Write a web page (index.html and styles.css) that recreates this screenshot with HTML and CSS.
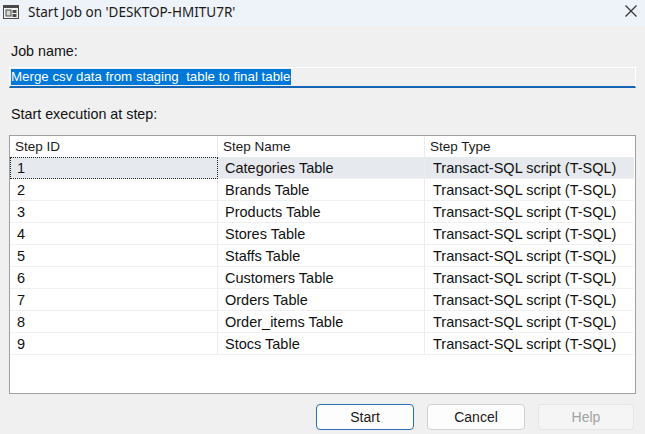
FILE: index.html
```html
<!DOCTYPE html>
<html>
<head>
<meta charset="utf-8">
<link rel="stylesheet" href="styles.css">
</head>
<body>
<div class="window">
  <div class="titlebar">
    <svg class="app-icon" width="16" height="14" viewBox="0 0 16 14">
      <rect x="0.5" y="0.5" width="15" height="13" fill="#f4f4f4" stroke="#4a4a4a"/>
      <rect x="1" y="1" width="14" height="2" fill="#4a4a4a"/>
      <rect x="3" y="5" width="5" height="6" fill="#d8d8d8" stroke="#4a4a4a" stroke-width="1"/>
      <rect x="9.5" y="5" width="4" height="3" fill="#4a4a4a"/>
      <rect x="9.5" y="9" width="4" height="3" fill="#4a4a4a"/>
    </svg>
    <span class="title">Start Job on 'DESKTOP-HMITU7R'</span>
    <svg class="close" width="12" height="12" viewBox="0 0 12 12">
      <path d="M0.5 0.5 L11.5 11.5 M11.5 0.5 L0.5 11.5" stroke="#333" stroke-width="1.2" fill="none"/>
    </svg>
  </div>
  <div class="content">
    <div class="label first">Job name:</div>
    <div class="textbox"><span class="sel">Merge csv data from staging&nbsp; table to final table</span></div>
    <div class="label second">Start execution at step:</div>
    <div class="grid">
      <div class="row head">
        <div class="cell">Step ID</div>
        <div class="cell">Step Name</div>
        <div class="cell">Step Type</div>
      </div>
      <div class="row selected">
        <div class="cell focus">1</div>
        <div class="cell">Categories Table</div>
        <div class="cell">Transact-SQL script (T-SQL)</div>
      </div>
      <div class="row">
        <div class="cell">2</div>
        <div class="cell">Brands Table</div>
        <div class="cell">Transact-SQL script (T-SQL)</div>
      </div>
      <div class="row">
        <div class="cell">3</div>
        <div class="cell">Products Table</div>
        <div class="cell">Transact-SQL script (T-SQL)</div>
      </div>
      <div class="row">
        <div class="cell">4</div>
        <div class="cell">Stores Table</div>
        <div class="cell">Transact-SQL script (T-SQL)</div>
      </div>
      <div class="row">
        <div class="cell">5</div>
        <div class="cell">Staffs Table</div>
        <div class="cell">Transact-SQL script (T-SQL)</div>
      </div>
      <div class="row">
        <div class="cell">6</div>
        <div class="cell">Customers Table</div>
        <div class="cell">Transact-SQL script (T-SQL)</div>
      </div>
      <div class="row">
        <div class="cell">7</div>
        <div class="cell">Orders Table</div>
        <div class="cell">Transact-SQL script (T-SQL)</div>
      </div>
      <div class="row">
        <div class="cell">8</div>
        <div class="cell">Order_items Table</div>
        <div class="cell">Transact-SQL script (T-SQL)</div>
      </div>
      <div class="row">
        <div class="cell">9</div>
        <div class="cell">Stocs Table</div>
        <div class="cell">Transact-SQL script (T-SQL)</div>
      </div>
    </div>
    <div class="buttons">
      <button class="btn default">Start</button>
      <button class="btn">Cancel</button>
      <button class="btn disabled">Help</button>
    </div>
  </div>
</div>
</body>
</html>
```

FILE: styles.css
```css
html, body {
  margin: 0;
  padding: 0;
}
body {
  width: 645px;
  height: 434px;
  background: #f0f0f0;
  font-family: "Liberation Sans", Arial, sans-serif;
  font-size: 14.3px;
  color: #111;
  overflow: hidden;
}
.window {
  display: flex;
  flex-direction: column;
  height: 434px;
}
.titlebar {
  height: 26px;
  background: #eef2f9;
  display: flex;
  align-items: center;
  padding: 0 8px 0 3px;
  box-sizing: border-box;
}
.app-icon {
  margin-top: -3px;
  flex: none;
}
.title {
  margin-left: 9px;
  font-family: "Noto Sans", "Open Sans", sans-serif;
  font-size: 13.5px;
  color: #1a1a1a;
  flex: 1;
  margin-top: -3px;
}
.close {
  margin-top: -5px;
}
.content {
  padding: 0 9px;
  display: flex;
  flex-direction: column;
}
.label {
  line-height: 16px;
  height: 16px;
  padding-left: 2px;
}
.label.first {
  margin-top: 17px;
}
.textbox {
  margin-top: 8px;
  height: 21px;
  box-sizing: border-box;
  border: 1px solid #ffffff;
  border-bottom: 2px solid #1565b5;
  padding: 1px 0 0 1px;
  line-height: 16px;
  font-size: 13.3px;
}
.sel {
  background: #0078d7;
  color: #fff;
  display: inline-block;
  height: 16px;
  padding-right: 1px;
}
.label.second {
  margin-top: 18px;
}
.grid {
  margin-top: 13px;
  height: 259px;
  box-sizing: border-box;
  border: 1px solid #a0a0a0;
  background: #fff;
}
.row {
  display: grid;
  grid-template-columns: 208px 207px 1fr;
  height: 22px;
  box-sizing: border-box;
  border-bottom: 1px solid #f0f0f0;
  margin-right: 1px;
}
.row.head {
  height: 21px;
  border-bottom: none;
}
.cell {
  padding-left: 7px;
  line-height: 22px;
  border-right: 1px solid #ececec;
  white-space: nowrap;
  overflow: hidden;
  box-sizing: border-box;
  font-size: 14.5px;
}
.cell:first-child {
  padding-left: 7px;
}
.cell:last-child {
  border-right: none;
  padding-left: 8px;
}
.head .cell {
  padding-left: 5px;
  line-height: 22px;
  font-size: 13.5px;
  color: #1a1a1a;
}
.selected {
  background: #e6eaef;
}
.cell.focus {
  border: 1px dotted #222;
  line-height: 20px;
  padding-left: 6px;
  height: 22px;
}
.buttons {
  margin-top: 10px;
  display: flex;
  justify-content: flex-end;
  padding-right: 2px;
}
.btn {
  width: 98px;
  height: 26px;
  margin-left: 13px;
  font-family: "Liberation Sans", Arial, sans-serif;
  font-size: 14px;
  color: #1a1a1a;
  background: #fdfdfd;
  border: 1px solid #d0d0d0;
  border-radius: 4px;
  padding: 0;
}
.btn.default {
  border: 1.5px solid #2c6fb5;
}
.btn.disabled {
  width: 96px;
  background: #f5f5f5;
  color: #a3a3a3;
  border-color: #e5e5e5;
}
```
